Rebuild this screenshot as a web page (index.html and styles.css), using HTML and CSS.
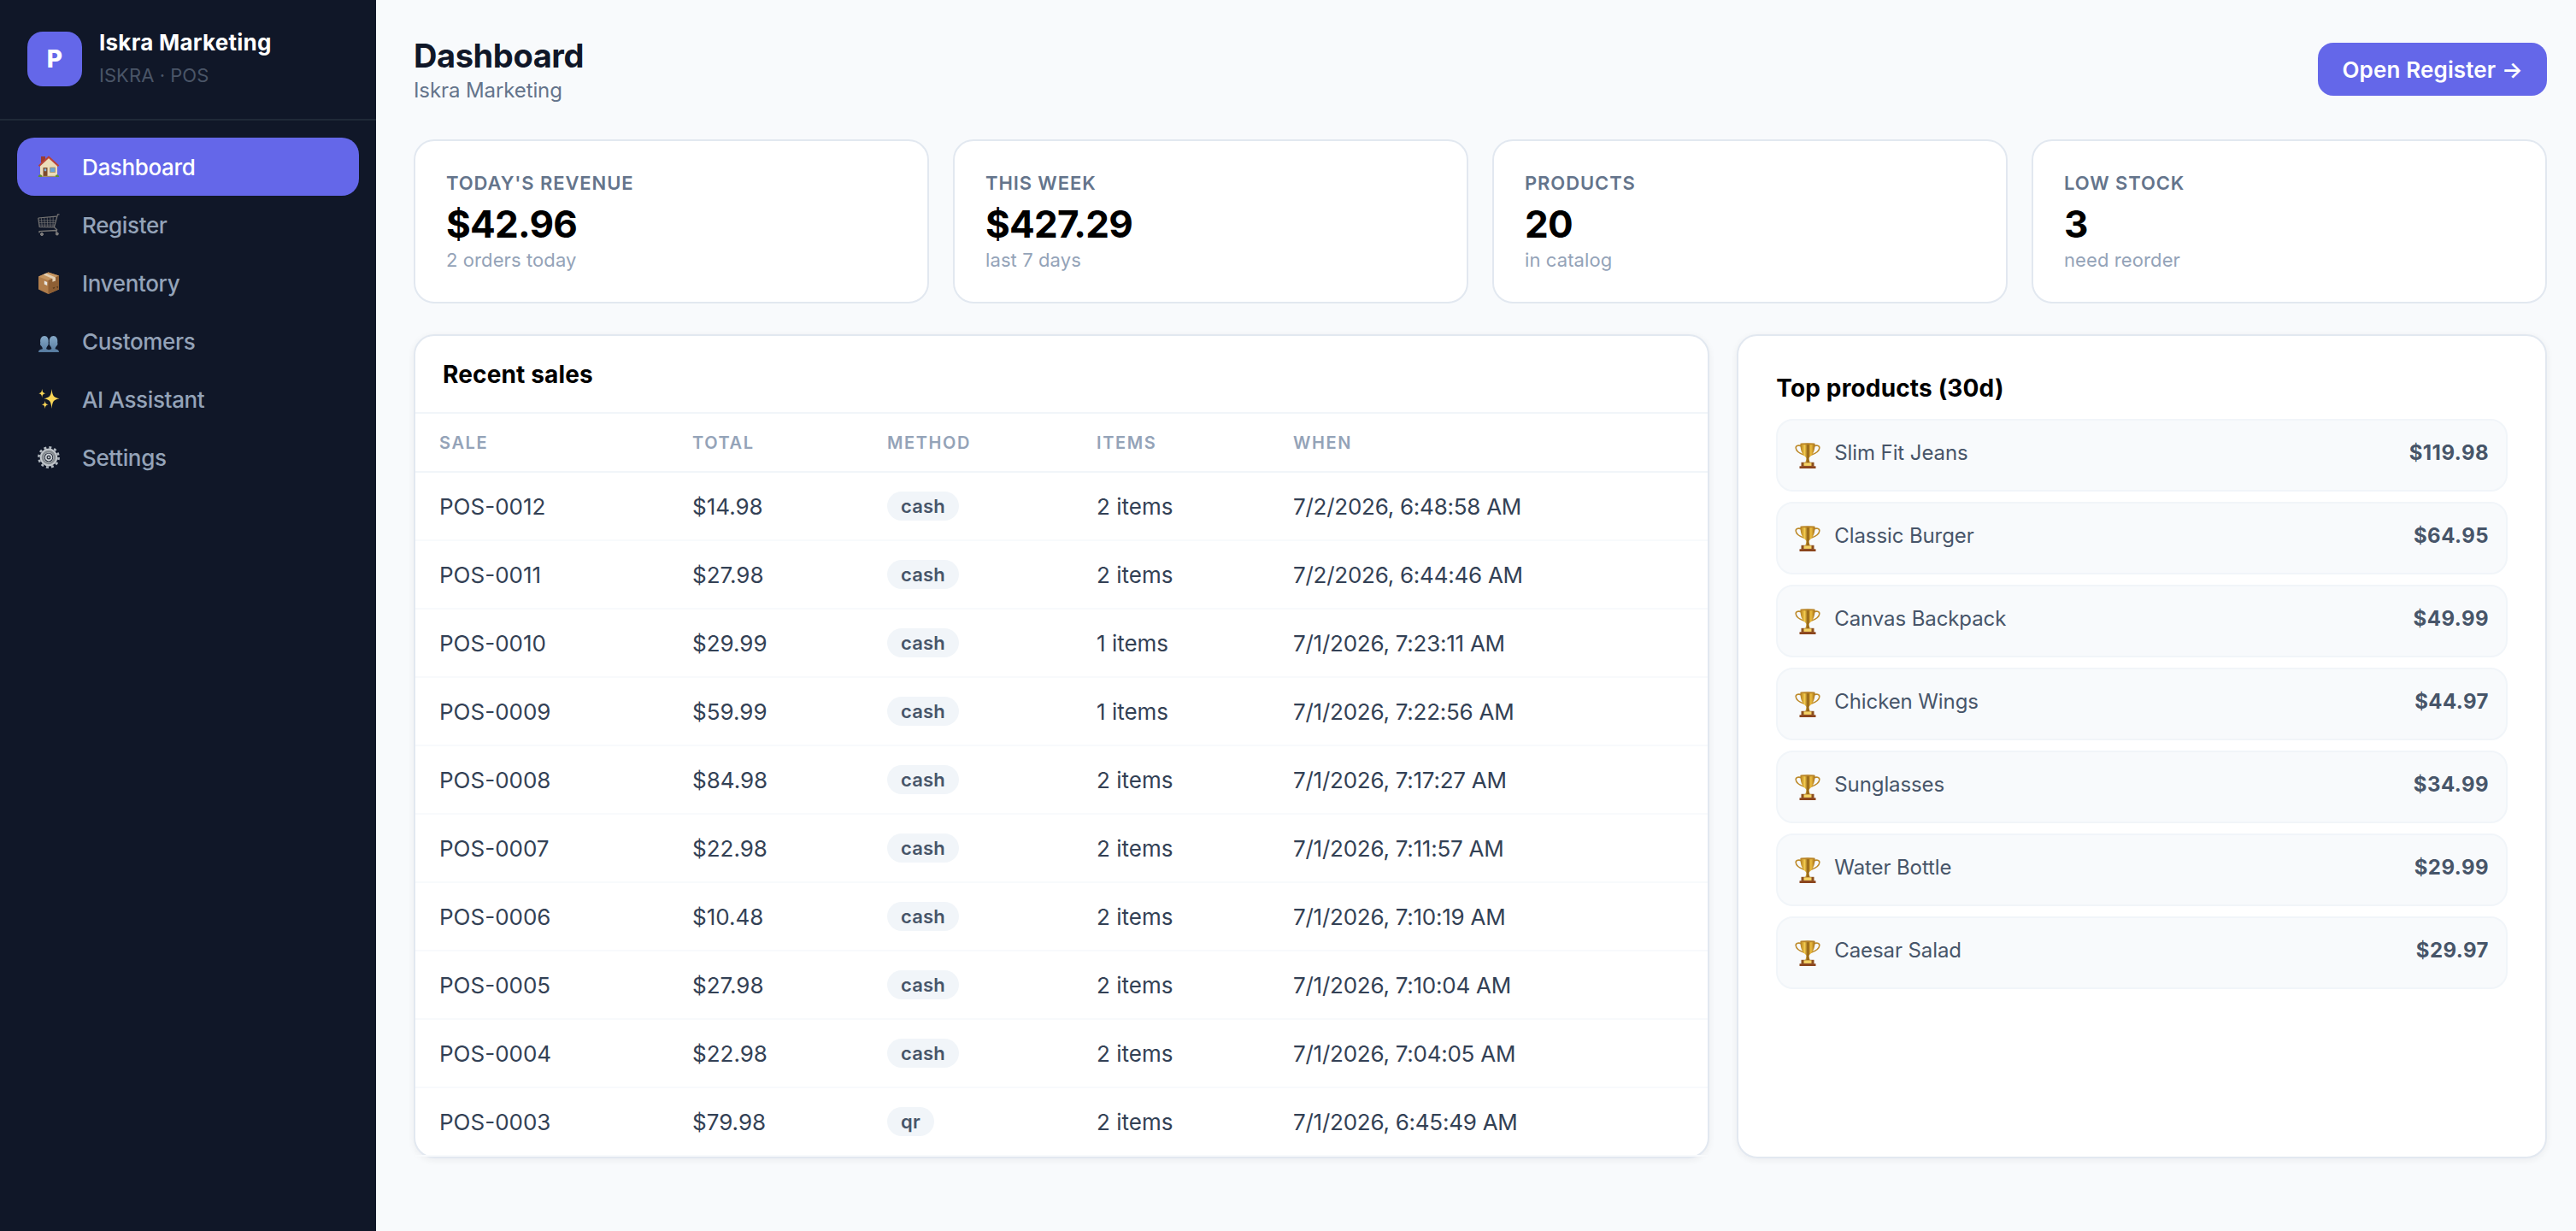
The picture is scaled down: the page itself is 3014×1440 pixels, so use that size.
FILE: index.html
```html
<!DOCTYPE html>
<html lang="en">
<head>
  <meta charset="utf-8">
  <meta name="viewport" content="width=device-width, initial-scale=1.0">
  <title>Iskra Marketing - Dashboard</title>
  <link rel="stylesheet" href="styles.css">
</head>
<body>
  <!-- shared icon, used by every top product row -->
  <svg class="defs" width="0" height="0">
    <defs>
      <linearGradient id="gold" x1="0" x2="1" y1="0" y2="0">
        <stop offset="0" stop-color="#b07a1c"/>
        <stop offset=".3" stop-color="#f3cb4e"/>
        <stop offset=".52" stop-color="#8a5a12"/>
        <stop offset=".72" stop-color="#f0c040"/>
        <stop offset="1" stop-color="#a06a16"/>
      </linearGradient>
      <linearGradient id="people" x1="0" x2="0" y1="0" y2="1">
        <stop offset="0" stop-color="#86a9c8"/>
        <stop offset="1" stop-color="#557a9e"/>
      </linearGradient>
      <symbol id="trophy" viewBox="0 0 30 30">
        <path d="M8 4C5 2.400 1 3 1.200 6c.3 3.500 3.500 6.200 9.800 8.200M22 4c3-1.600 7-1 6.800 2-.3 3.500-3.500 6.200-9.800 8.200" fill="none" stroke="#bd8a2a" stroke-width="1.600"/>
        <path d="M6.500.8h17c.2 7-1.600 12.800-6 15.800-.9.800-1.100 2.200-.6 3.600l1 3.400h-5.800l1-3.400c.5-1.400.3-2.800-.6-3.600C8.100 13.600 6.300 7.800 6.500.8z" fill="url(#gold)"/>
        <ellipse cx="15" cy="1.200" rx="8.400" ry="1" fill="#b98428"/>
        <path d="M7.500 22.800h15v5h-15z" fill="#8c4f1d"/>
        <path d="M10.500 23.300h9v3.600h-9z" fill="#f4d264"/>
        <path d="M5.500 27.300h19V30h-19z" fill="#8a431b"/>
      </symbol>
    </defs>
  </svg>

  <div class="app">
    <aside class="sidebar">
      <div class="brand">
        <div class="logo">P</div>
        <div class="brand-text">
          <div class="brand-name">Iskra Marketing</div>
          <div class="brand-sub">ISKRA · POS</div>
        </div>
      </div>
      <nav class="menu">
        <a href="#" class="active">
          <svg class="icon" viewBox="0 0 26 26">
            <path d="M4 1h5v7H4z" fill="#9c3b30"/>
            <path d="M3 11 13 2l10 9v13H3z" fill="#ecdcb8"/>
            <path d="M1.500 12.200 13 1.800l11.500 10.400" fill="none" stroke="#b8443a" stroke-width="2.200"/>
            <path d="M6.500 14h5v10h-5z" fill="#7d4a2c"/>
            <path d="M7.800 15.200h2.400v3H7.800z" fill="#7fb4dc"/>
            <path d="M14.500 14h6v5.500h-6z" fill="#6ba5d6" stroke="#a98e62" stroke-width=".8"/>
            <path d="M.8 25c-.4-3 3.400-3.800 4.700-1v1zM20.500 25c0-3.400 4.400-3.800 4.700 0z" fill="#5f8f35"/>
            <path d="M5 23.800h16V25H5z" fill="#a08c68"/>
          </svg>
          Dashboard
        </a>
        <a href="#">
          <svg class="icon" viewBox="0 0 26 26" fill="none" stroke="#777675">
            <path d="M25.500.8h-2l-4.200 15.400M.8 5 22 3.200M.8 5l1.400 10.500 17.600.2" stroke-width="1.200"/>
            <path d="M1.300 8h20M1.700 10.600h19M2 13.200h18M4.300 4.800l1 10.600M7.800 4.500l.8 11M11.200 4.200l.6 11.200M14.700 4l.3 11.500M18.200 3.600 18 15.500" stroke-width=".7"/>
            <path d="M19.600 16l3 2.600-1 3.400M21.800 19.500 2 20.700v1.800" stroke-width="1.300"/>
            <g fill="#777" stroke="#8b8886" stroke-width="1">
              <circle cx="5" cy="24" r="1.500"/>
              <circle cx="22.800" cy="23.500" r="1.500"/>
            </g>
          </svg>
          Register
        </a>
        <a href="#">
          <svg class="icon" viewBox="0 0 26 26">
            <path d="M1 5.500 12.500.5 25 4.500v16L12.500 26 1 20.500z" fill="#b07d4b"/>
            <path d="M1 5.500 12.500.5 25 4.500 12.500 10z" fill="#c59560"/>
            <path d="M12.500 10 25 4.500v16L12.500 26z" fill="#8e5f34"/>
            <path d="M6.500 3.200 10 1.700l11 4.800v4l-3.600 1.300V8z" fill="#e3cfb3"/>
            <path d="M7.800 10.500l3.400 1.400v4.200L7.800 14.500z" fill="#e8e6e2"/>
            <path d="M17.500 18.800l3-1.300-1.500 2.600zM22 17.500l1.800-.8v2.500" fill="#503419"/>
          </svg>
          Inventory
        </a>
        <a href="#">
          <svg class="icon" viewBox="0 0 26 26" fill="url(#people)">
            <path d="M1 26c0-2.500 1.400-3.100 4.800-3.700 0-1.600-.5-2-1.300-3.300-1.600-1-1.800-3-1.200-4-.8-5 1.400-8 4.700-8s5.300 3 4.600 8c.4 1.200 0 3-1.200 4-.6 1.300-1.200 1.900-1.200 3.300l3.400 1.200V26z"/>
            <path d="M12.800 26v-2.500l3.500-1.200c0-1.400-.6-2-1.300-3.300-1.200-1-1.500-2.800-1.100-4-.7-5 1.400-8 4.600-8s5.500 3 4.700 8c.6 1 .3 3-1.200 4-.8 1.300-1.400 1.700-1.400 3.300 3 .6 4.400 1.200 4.400 3.700z"/>
          </svg>
          Customers
        </a>
        <a href="#">
          <svg class="icon" viewBox="0 0 26 26" fill="#f8d556">
            <path d="M16.500 1c.9 8 2.200 10 9 11.300-6.800 1.200-8.100 3.200-9 11.700-.9-8.500-2.200-10.500-9-11.700C14.300 11 15.600 9 16.500 1z"/>
            <path d="M5.200.8c.4 3.800 1 4.800 4 5.400-3 .6-3.600 1.500-4 5-.4-3.500-1-4.400-4-5C4.200 5.600 4.800 4.600 5.200.8zM8.700 14.500c.4 3.600 1 4.200 4 4.800-3 .6-3.600 1.500-4 5-.4-3.500-1-4.400-4-5 3-.6 3.600-1.200 4-4.800z"/>
          </svg>
          AI Assistant
        </a>
        <a href="#">
          <svg class="icon" viewBox="0 0 26 26" fill="none">
            <circle cx="13" cy="13" r="11.600" stroke="#b3bac1" stroke-width="2.600" stroke-dasharray="3 3.070"/>
            <circle cx="13" cy="13" r="7.800" stroke="#c0c5ca" stroke-width="5.200"/>
            <circle cx="13" cy="13" r="7" stroke="#858b90" stroke-width="2.600"/>
            <circle cx="13" cy="13" r="4.400" fill="#cfd4d8"/>
            <circle cx="13" cy="13" r="2.500" fill="#343b45"/>
            <circle cx="13" cy="13" r="1" fill="#dde1e5"/>
          </svg>
          Settings
        </a>
      </nav>
    </aside>

    <main class="content">
      <header class="page-head">
        <div>
          <h1>Dashboard</h1>
          <p class="page-sub">Iskra Marketing</p>
        </div>
        <a href="#" class="btn">Open Register →</a>
      </header>

      <section class="stats">
        <div class="stat">
          <div class="stat-label">Today's revenue</div>
          <div class="stat-value">$42.96</div>
          <div class="stat-sub">2 orders today</div>
        </div>
        <div class="stat">
          <div class="stat-label">This week</div>
          <div class="stat-value">$427.29</div>
          <div class="stat-sub">last 7 days</div>
        </div>
        <div class="stat">
          <div class="stat-label">Products</div>
          <div class="stat-value">20</div>
          <div class="stat-sub">in catalog</div>
        </div>
        <div class="stat">
          <div class="stat-label">Low stock</div>
          <div class="stat-value">3</div>
          <div class="stat-sub">need reorder</div>
        </div>
      </section>

      <section class="panels">
        <div class="panel">
          <h2 class="panel-head">Recent sales</h2>
          <table>
            <colgroup>
              <col class="col-sale"><col class="col-total"><col class="col-method"><col class="col-items"><col>
            </colgroup>
            <thead>
              <tr><th>Sale</th><th>Total</th><th>Method</th><th>Items</th><th>When</th></tr>
            </thead>
            <tbody>
              <tr><td>POS-0012</td><td>$14.98</td><td><span class="badge">cash</span></td><td>2 items</td><td>7/2/2026, 6:48:58 AM</td></tr>
              <tr><td>POS-0011</td><td>$27.98</td><td><span class="badge">cash</span></td><td>2 items</td><td>7/2/2026, 6:44:46 AM</td></tr>
              <tr><td>POS-0010</td><td>$29.99</td><td><span class="badge">cash</span></td><td>1 items</td><td>7/1/2026, 7:23:11 AM</td></tr>
              <tr><td>POS-0009</td><td>$59.99</td><td><span class="badge">cash</span></td><td>1 items</td><td>7/1/2026, 7:22:56 AM</td></tr>
              <tr><td>POS-0008</td><td>$84.98</td><td><span class="badge">cash</span></td><td>2 items</td><td>7/1/2026, 7:17:27 AM</td></tr>
              <tr><td>POS-0007</td><td>$22.98</td><td><span class="badge">cash</span></td><td>2 items</td><td>7/1/2026, 7:11:57 AM</td></tr>
              <tr><td>POS-0006</td><td>$10.48</td><td><span class="badge">cash</span></td><td>2 items</td><td>7/1/2026, 7:10:19 AM</td></tr>
              <tr><td>POS-0005</td><td>$27.98</td><td><span class="badge">cash</span></td><td>2 items</td><td>7/1/2026, 7:10:04 AM</td></tr>
              <tr><td>POS-0004</td><td>$22.98</td><td><span class="badge">cash</span></td><td>2 items</td><td>7/1/2026, 7:04:05 AM</td></tr>
              <tr><td>POS-0003</td><td>$79.98</td><td><span class="badge">qr</span></td><td>2 items</td><td>7/1/2026, 6:45:49 AM</td></tr>
            </tbody>
          </table>
        </div>

        <div class="panel top-products">
          <h2>Top products (30d)</h2>
          <ul>
            <li><svg class="trophy"><use href="#trophy"/></svg><span>Slim Fit Jeans</span><b>$119.98</b></li>
            <li><svg class="trophy"><use href="#trophy"/></svg><span>Classic Burger</span><b>$64.95</b></li>
            <li><svg class="trophy"><use href="#trophy"/></svg><span>Canvas Backpack</span><b>$49.99</b></li>
            <li><svg class="trophy"><use href="#trophy"/></svg><span>Chicken Wings</span><b>$44.97</b></li>
            <li><svg class="trophy"><use href="#trophy"/></svg><span>Sunglasses</span><b>$34.99</b></li>
            <li><svg class="trophy"><use href="#trophy"/></svg><span>Water Bottle</span><b>$29.99</b></li>
            <li><svg class="trophy"><use href="#trophy"/></svg><span>Caesar Salad</span><b>$29.97</b></li>
          </ul>
        </div>
      </section>
    </main>
  </div>
</body>
</html>
```
FILE: styles.css
```css
* { box-sizing: border-box; margin: 0; padding: 0; }
body { font-family: Inter, "Liberation Sans", sans-serif; background: #f8fafc; color: #000; }
a { text-decoration: none; }
ul { list-style: none; }
.defs { display: block; }
.app { display: flex; height: 1440px; }

/* sidebar */
.sidebar { width: 440px; flex: none; background: #101728; }
.brand { display: flex; gap: 20px; height: 141px; padding: 34px 32px 0; border-bottom: 2px solid #1f2937; }
.logo { width: 64px; height: 64px; margin-top: 3px; border-radius: 18px; background: #6467e9; color: #fff; font-size: 28px; font-weight: 800; line-height: 64px; text-align: center; }
.brand-name { color: #fff; font-size: 26px; font-weight: 700; line-height: 32px; letter-spacing: 0.25px; }
.brand-sub { margin-top: 9px; color: #4a5567; font-size: 22px; line-height: 27px; letter-spacing: 0.05px; }
.menu { padding: 20px; }
.menu a { display: flex; align-items: center; gap: 26px; height: 68px; padding: 0 24px; border-radius: 20px; color: #94a3b8; font-size: 26px; font-weight: 500; letter-spacing: -0.35px; }
.menu a.active { background: #6467e9; color: #fff; }
.icon { width: 26px; height: 26px; }

/* page header */
.content { flex: 1; padding: 42px 34px 0 44px; }
.page-head { display: flex; justify-content: space-between; height: 121px; }
h1 { color: #101728; font-size: 38px; font-weight: 700; line-height: 46px; letter-spacing: -0.4px; }
.page-sub { margin-top: 3px; color: #64748b; font-size: 24px; line-height: 29px; letter-spacing: -0.1px; }
.btn { height: 62px; margin-top: 8px; padding: 0 28px; border-radius: 18px; background: #6467e9; color: #fff; font-size: 26px; font-weight: 600; line-height: 63px; letter-spacing: 0.15px; }

/* stat cards */
.stats { display: grid; grid-template-columns: repeat(4, 1fr); gap: 28px; }
.stat { height: 192px; padding: 35px 36px 0; background: #fff; border: 2px solid #e2e8f0; border-radius: 24px; }
.stat-label { color: #64748b; font-size: 22px; font-weight: 600; line-height: 28px; letter-spacing: 0.9px; text-transform: uppercase; }
.stat-value { margin-top: 8px; font-size: 44px; font-weight: 700; line-height: 53px; letter-spacing: -0.75px; }
.stat-sub { color: #94a3b8; font-size: 22px; line-height: 27px; margin-top: 2px; letter-spacing: 0.1px; }

/* panels */
.panels { display: grid; grid-template-columns: 1.6fr 1fr; gap: 32px; margin-top: 36px; }
.panel { height: 964px; background: #fff; border: 2px solid #e2e8f0; border-radius: 24px; box-shadow: 0 2px 8px rgba(15, 23, 42, 0.06); }
h2 { font-size: 28px; font-weight: 700; line-height: 34px; letter-spacing: 0.15px; }
.panel-head { height: 91px; padding: 28px 32px 0; border-bottom: 2px solid #f1f5f9; }
table { width: 100%; table-layout: fixed; border-collapse: separate; border-spacing: 0; }
.col-sale { width: 296px; }
.col-total { width: 228px; }
.col-method { width: 245px; }
.col-items { width: 230px; }
th { height: 69px; padding: 0 28px; border-bottom: 2px solid #f1f5f9; color: #94a3b8; font-size: 20px; font-weight: 600; letter-spacing: 1.6px; text-align: left; text-transform: uppercase; }
td { height: 80px; padding: 0 28px; border-bottom: 2px solid #f8fafc; color: #334155; font-size: 26px; white-space: nowrap; }
td:last-child { letter-spacing: -0.25px; }
.badge { display: inline-block; height: 34px; padding: 0 16px; border-radius: 17px; background: #f1f5f9; color: #475569; font-size: 22px; font-weight: 600; line-height: 34px; letter-spacing: 0.2px; vertical-align: middle; }

/* top products */
.top-products { padding: 44px; }
.top-products ul { display: grid; gap: 12px; margin-top: 19px; }
.top-products li { display: flex; height: 85px; padding: 20px; background: #f8fafc; border: 2px solid #f1f5f9; border-radius: 20px; color: #475569; font-size: 24px; line-height: 35px; letter-spacing: -0.1px; }
.top-products b { margin-left: auto; font-weight: 700; letter-spacing: 0.45px; }
.trophy { width: 30px; height: 30px; margin: 6px 16px 0 0; }
```
